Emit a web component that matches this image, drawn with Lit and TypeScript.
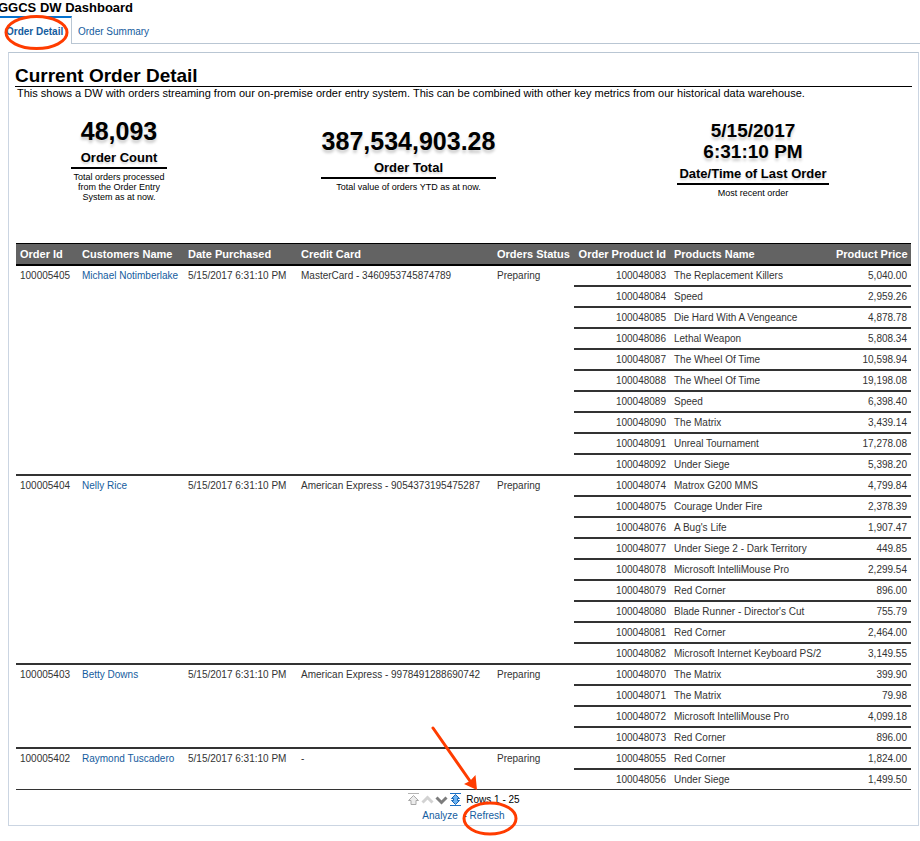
import { LitElement, html, css, svg } from "lit";
import { customElement } from "lit/decorators.js";

interface Line {
  id: string;
  name: string;
  price: string;
}

interface Order {
  id: string;
  customer: string;
  date: string;
  card: string;
  status: string;
  lines: Line[];
}

const line = (id: string, name: string, price: string): Line => ({ id, name, price });

const orders: Order[] = [
  {
    id: "100005405",
    customer: "Michael Notimberlake",
    date: "5/15/2017 6:31:10 PM",
    card: "MasterCard - 3460953745874789",
    status: "Preparing",
    lines: [
      line("100048083", "The Replacement Killers", "5,040.00"),
      line("100048084", "Speed", "2,959.26"),
      line("100048085", "Die Hard With A Vengeance", "4,878.78"),
      line("100048086", "Lethal Weapon", "5,808.34"),
      line("100048087", "The Wheel Of Time", "10,598.94"),
      line("100048088", "The Wheel Of Time", "19,198.08"),
      line("100048089", "Speed", "6,398.40"),
      line("100048090", "The Matrix", "3,439.14"),
      line("100048091", "Unreal Tournament", "17,278.08"),
      line("100048092", "Under Siege", "5,398.20"),
    ],
  },
  {
    id: "100005404",
    customer: "Nelly Rice",
    date: "5/15/2017 6:31:10 PM",
    card: "American Express - 9054373195475287",
    status: "Preparing",
    lines: [
      line("100048074", "Matrox G200 MMS", "4,799.84"),
      line("100048075", "Courage Under Fire", "2,378.39"),
      line("100048076", "A Bug's Life", "1,907.47"),
      line("100048077", "Under Siege 2 - Dark Territory", "449.85"),
      line("100048078", "Microsoft IntelliMouse Pro", "2,299.54"),
      line("100048079", "Red Corner", "896.00"),
      line("100048080", "Blade Runner - Director's Cut", "755.79"),
      line("100048081", "Red Corner", "2,464.00"),
      line("100048082", "Microsoft Internet Keyboard PS/2", "3,149.55"),
    ],
  },
  {
    id: "100005403",
    customer: "Betty Downs",
    date: "5/15/2017 6:31:10 PM",
    card: "American Express - 9978491288690742",
    status: "Preparing",
    lines: [
      line("100048070", "The Matrix", "399.90"),
      line("100048071", "The Matrix", "79.98"),
      line("100048072", "Microsoft IntelliMouse Pro", "4,099.18"),
      line("100048073", "Red Corner", "896.00"),
    ],
  },
  {
    id: "100005402",
    customer: "Raymond Tuscadero",
    date: "5/15/2017 6:31:10 PM",
    card: "-",
    status: "Preparing",
    lines: [
      line("100048055", "Red Corner", "1,824.00"),
      line("100048056", "Under Siege", "1,499.50"),
    ],
  },
];

const pagerIcons = [
  {
    label: "First rows",
    art: svg`<path d="M1 .5H12" stroke="#b4b4b4"/><path d="M6.5 2.5 L11.5 7.5 H9 V11.5 H4 V7.5 H1.5 Z" fill="#ececec" stroke="#a8a8a8"/>`,
  },
  {
    label: "Previous rows",
    art: svg`<path d="M1.5 9.5 L6.5 4.5 L11.5 9.5" fill="none" stroke="#d2d2d2" stroke-width="3"/>`,
  },
  {
    label: "Next rows",
    art: svg`<path d="M1.5 4.5 L6.5 9.5 L11.5 4.5" fill="none" stroke="#7c7c7c" stroke-width="3"/>`,
  },
  {
    label: "All rows",
    art: svg`<path d="M1 .5H12M1 12.5H12" stroke="#1a6fc4"/><path d="M6.5 1.5 L10.5 5.5 H8.5 V7.5 H10.5 L6.5 11.5 L2.5 7.5 H4.5 V5.5 H2.5 Z" fill="#6db3f2" stroke="#1565b5"/>`,
  },
];

@customElement("app-root")
export class AppRoot extends LitElement {
  static styles = css`
    :host {
      display: block;
      position: relative;
      min-height: 100vh;
      background: #fff;
      color: #000;
      font: 10px/12px "Liberation Sans", Arial, sans-serif;
    }
    h1, h2, p, dl, dd, dt { margin: 0; }
    a { color: #145c9e; text-decoration: none; }
    .brand { margin-left: -2px; font-size: 13px; line-height: 16px; }
    .tabs { display: flex; height: 28px; line-height: 28px; }
    .tab {
      box-sizing: border-box;
      padding: 0 6px;
      border-top: 2px solid transparent;
      border-bottom: 1px solid #b9c6d3;
    }
    .tab.active {
      width: 72px;
      border-top-color: #0572ce;
      border-right: 1px solid #b9c6d3;
      border-bottom: 0;
      font-weight: bold;
    }
    .rest { flex: 1; border-bottom: 1px solid #b9c6d3; }
    .panel { margin: 8px 1px 0 8px; padding: 12px 6px 3px; border: 1px solid #cbd5e2; border-top-color: #b9c6d3; }
    .title { border-bottom: 1px solid #000; font-size: 19px; line-height: 21px; }
    .about { padding: 0 2px; font-size: 11px; line-height: 13px; }
    .tiles {
      display: grid;
      grid-template-columns: 208fr 371fr 318fr;
      align-items: center;
      justify-items: center;
      padding: 16px 0 41px;
      text-align: center;
    }
    .tile { display: flex; flex-direction: column; }
    .tile.narrow { width: 96px; }
    .tile.medium { width: 152px; }
    .value {
      order: 1;
      padding: 0 1px;
      font-size: 25px;
      line-height: 30px;
      font-weight: bold;
      text-shadow: 0 3px 3px rgba(0, 0, 0, 0.2);
    }
    .value.date { padding: 0 20px; font-size: 19px; line-height: 21px; }
    .label {
      order: 2;
      padding: 4px 0 2px;
      border-bottom: 2px solid #000;
      font-size: 13px;
      line-height: 15px;
      font-weight: bold;
      text-shadow: 0 2px 2px rgba(0, 0, 0, 0.15);
    }
    .note { order: 3; padding-top: 3px; font-size: 9px; line-height: 10px; }
    .orders {
      width: calc(100% - 2px);
      margin: 0 1px;
      border-collapse: separate;
      border-spacing: 0;
      table-layout: fixed;
      white-space: nowrap;
    }
    .c-order { width: 62px; }
    .c-customer { width: 106px; }
    .c-date { width: 113px; }
    .c-card { width: 196px; }
    .c-status { width: 81px; }
    .c-line { width: 96px; }
    .c-product { width: 162px; }
    .c-price { width: 79px; }
    .orders th {
      height: 20px;
      padding: 0 4px;
      border-top: 1px solid #000;
      border-bottom: 2px solid #000;
      background: #636363;
      color: #fff;
      font-size: 11px;
      text-align: left;
    }
    .orders td {
      height: 19px;
      padding: 0 4px;
      border-bottom: 2px solid #333;
      color: #333;
      vertical-align: top;
      line-height: 19px;
    }
    .orders .num { text-align: right; }
    .orders td.last { border-bottom-width: 1px; }
    .pager { display: flex; justify-content: center; align-items: center; gap: 1px; padding-top: 3px; height: 13px; }
    .step { display: block; width: 13px; height: 13px; padding: 0; border: 0; background: none; }
    .step svg { display: block; }
    .pager span { padding-left: 3px; }
    .links { padding-top: 3px; text-align: center; line-height: 13px; }
    .marks { position: absolute; top: 0; left: 0; pointer-events: none; }
  `;

  private renderOrder(order: Order, isLast: boolean) {
    const edge = isLast ? "last" : "";
    const span = order.lines.length;
    return order.lines.map((item, i) => {
      const bottom = isLast && i === span - 1 ? "last" : "";
      return html`<tr>
        ${i === 0
          ? html`<td class=${edge} rowspan=${span}>${order.id}</td>
              <td class=${edge} rowspan=${span}><a href="#customer">${order.customer}</a></td>
              <td class=${edge} rowspan=${span}>${order.date}</td>
              <td class=${edge} rowspan=${span}>${order.card}</td>
              <td class=${edge} rowspan=${span}>${order.status}</td>`
          : ""}
        <td class="num ${bottom}">${item.id}</td>
        <td class=${bottom}>${item.name}</td>
        <td class="num ${bottom}">${item.price}</td>
      </tr>`;
    });
  }

  render() {
    return html`
      <h1 class="brand">GGCS DW Dashboard</h1>
      <nav class="tabs">
        <a class="tab active" href="#detail">Order Detail</a>
        <a class="tab" href="#summary">Order Summary</a>
        <div class="rest"></div>
      </nav>
      <main class="panel">
        <h2 class="title">Current Order Detail</h2>
        <p class="about">
          This shows a DW with orders streaming from our on-premise order entry system. This can be combined with other
          key metrics from our historical data warehouse.
        </p>
        <dl class="tiles">
          <div class="tile narrow">
            <dt class="label">Order Count</dt>
            <dd class="value">48,093</dd>
            <dd class="note">Total orders processed from the Order Entry System as at now.</dd>
          </div>
          <div class="tile">
            <dt class="label">Order Total</dt>
            <dd class="value">387,534,903.28</dd>
            <dd class="note">Total value of orders YTD as at now.</dd>
          </div>
          <div class="tile medium">
            <dt class="label">Date/Time of Last Order</dt>
            <dd class="value date">5/15/2017 6:31:10 PM</dd>
            <dd class="note">Most recent order</dd>
          </div>
        </dl>
        <table class="orders">
          <colgroup>
            <col class="c-order" />
            <col class="c-customer" />
            <col class="c-date" />
            <col class="c-card" />
            <col class="c-status" />
            <col class="c-line" />
            <col class="c-product" />
            <col class="c-price" />
          </colgroup>
          <thead>
            <tr>
              <th>Order Id</th>
              <th>Customers Name</th>
              <th>Date Purchased</th>
              <th>Credit Card</th>
              <th>Orders Status</th>
              <th class="num">Order Product Id</th>
              <th>Products Name</th>
              <th class="num">Product Price</th>
            </tr>
          </thead>
          <tbody>
            ${orders.map((o, i) => this.renderOrder(o, i === orders.length - 1))}
          </tbody>
        </table>
        <div class="pager">
          ${pagerIcons.map(
            (icon) => html`<button class="step" aria-label=${icon.label}>
              <svg width="13" height="13" viewBox="0 0 13 13" aria-hidden="true">${icon.art}</svg>
            </button>`
          )}
          <span>Rows 1 - 25</span>
        </div>
        <div class="links"><a href="#analyze">Analyze</a>&nbsp; -&nbsp;<a href="#refresh">Refresh</a></div>
      </main>
      <svg class="marks" width="520" height="841" viewBox="0 0 520 841" aria-hidden="true">
        <g fill="none" stroke="#ff3c00" stroke-width="3">
          <ellipse cx="36.5" cy="32.5" rx="30.5" ry="16" />
          <ellipse cx="490" cy="818.5" rx="26" ry="15.5" />
          <path d="M433 728 L470 781" stroke-linecap="round" />
        </g>
        <path d="M477 790 L464 784 L470 781 L475.5 775 Z" fill="#ff3c00" />
      </svg>
    `;
  }
}
